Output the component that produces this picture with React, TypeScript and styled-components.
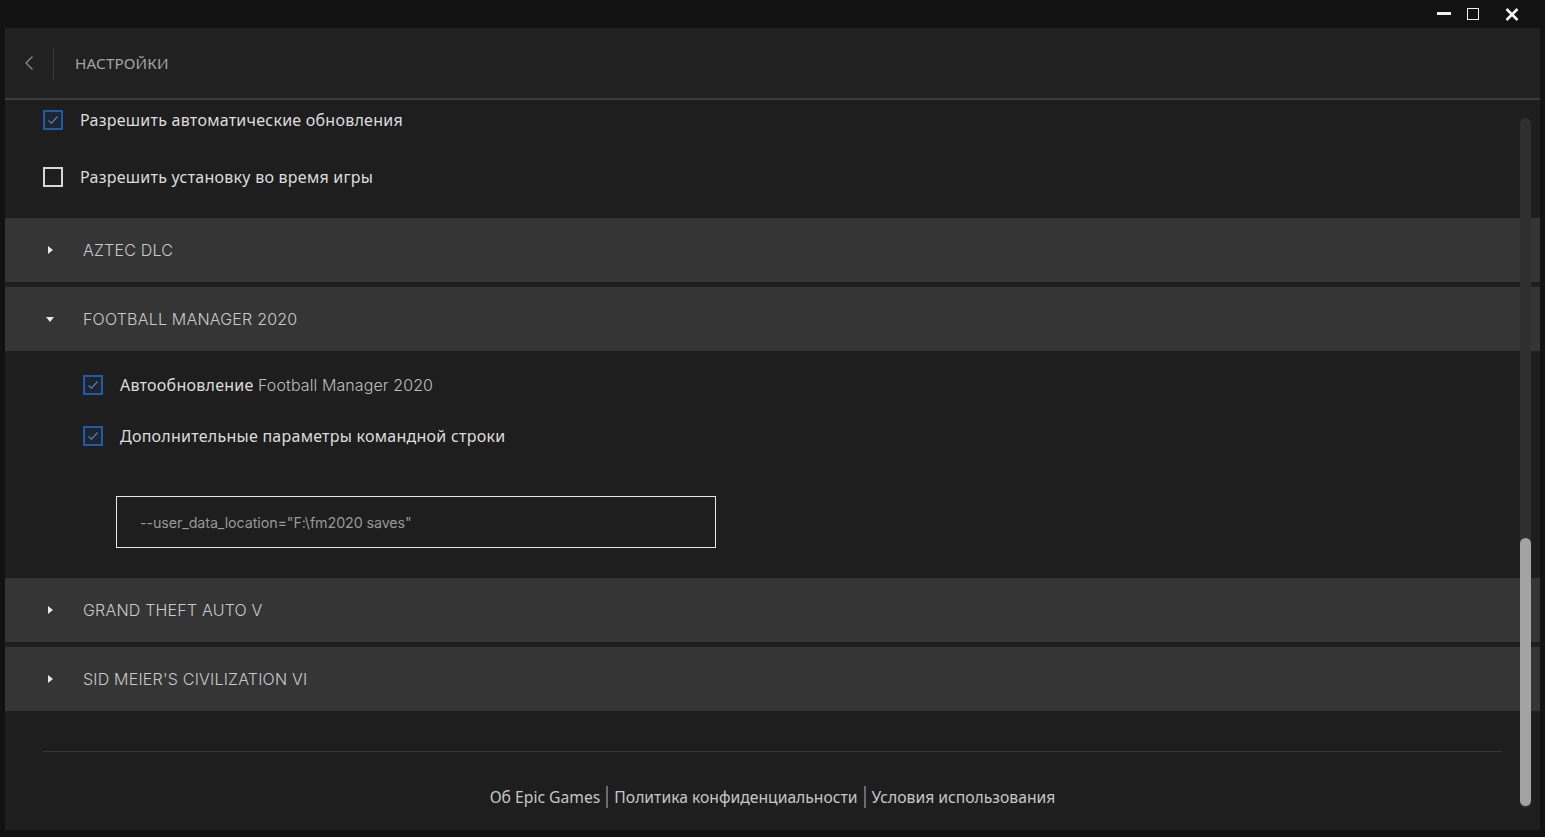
import React from "react";
import styled, { createGlobalStyle } from "styled-components";

const GlobalStyle = createGlobalStyle`
  html, body {
    margin: 0;
    padding: 0;
    background: #121212;
    font-family: "Noto Sans", "Liberation Sans", sans-serif;
  }
  * { box-sizing: border-box; }
`;

const Frame = styled.div`
  display: flex;
  flex-direction: column;
  height: 837px;
  background: #121212;
  overflow: hidden;
`;

const TitleBar = styled.div`
  display: flex;
  justify-content: flex-end;
  align-items: center;
  height: 28px;
  padding-right: 9px;
`;

const WinButton = styled.div<{ $w: number }>`
  display: flex;
  align-items: center;
  justify-content: center;
  width: ${({ $w }) => $w}px;
  height: 28px;
`;

const Window = styled.div`
  position: relative;
  flex: 1;
  display: flex;
  flex-direction: column;
  margin: 0 5px 7px 5px;
  background: #1e1e1e;
`;

const Header = styled.div`
  display: flex;
  align-items: center;
  height: 70px;
  padding-left: 17px;
  background: #212121;
`;

const Separator = styled.div`
  width: 1px;
  height: 32px;
  margin-left: 17px;
  background: #3a3a3a;
`;

const Title = styled.div`
  margin-left: 21px;
  font-size: 15.3px;
  color: #a4a4a4;
  letter-spacing: 0.1px;
`;

const Divider = styled.div`
  height: 2px;
  background: #3b3b3b;
`;

const Scroll = styled.div`
  position: relative;
  flex: 1;
  overflow: hidden;
`;

const TopList = styled.div`
  display: flex;
  flex-direction: column;
  gap: 37px;
  padding: 10px 0 31px 38px;
`;

const CheckRow = styled.div`
  display: flex;
  align-items: center;
  gap: 17px;
  height: 20px;
`;

const Box = styled.div<{ $checked: boolean }>`
  display: flex;
  align-items: center;
  justify-content: center;
  width: 20px;
  height: 20px;
  border: 2px solid ${({ $checked }) => ($checked ? "#235aa6" : "#d6d6d6")};
  background: ${({ $checked }) => ($checked ? "#1d2531" : "transparent")};
`;

const Label = styled.span`
  font-size: 16px;
  color: #dcdcdc;
  letter-spacing: 0.25px;
  white-space: nowrap;
`;

const GameName = styled.span`
  font-family: Inter, "Liberation Sans", sans-serif;
  font-weight: 300;
  color: #bdbdbd;
  letter-spacing: 0.1px;
`;

const Section = styled.div`
  margin-bottom: 5px;
`;

const SectionHeader = styled.div`
  display: flex;
  align-items: center;
  height: 64px;
  padding-left: 39px;
  background: #353535;
`;

const Arrow = styled.div`
  display: flex;
  align-items: center;
  justify-content: center;
  width: 12px;
  height: 12px;
`;

const SectionTitle = styled.span`
  margin-left: 27px;
  font-family: Inter, "Liberation Sans", sans-serif;
  font-weight: 300;
  font-size: 16px;
  color: #cacaca;
  letter-spacing: 0.2px;
`;

const SectionBody = styled.div`
  display: flex;
  flex-direction: column;
  padding: 24px 0 25px 78px;
`;

const SubList = styled.div`
  display: flex;
  flex-direction: column;
  gap: 31px;
`;

const ArgsInput = styled.div`
  display: flex;
  align-items: center;
  width: 600px;
  height: 52px;
  margin: 50px 0 0 33px;
  padding-left: 23px;
  border: 1px solid #e6e6e6;
  font-family: Inter, "Liberation Sans", sans-serif;
  font-size: 14.3px;
  color: #989898;
  letter-spacing: -0.1px;
`;

const FooterLine = styled.div`
  height: 1px;
  margin: 40px 38px 0 38px;
  background: #363636;
`;

const Footer = styled.div`
  display: flex;
  justify-content: center;
  align-items: center;
  padding-top: 34px;
`;

const FooterLink = styled.span`
  font-size: 15.7px;
  color: #c6c6c6;
  line-height: 22px;
`;

const FooterSep = styled.span`
  width: 2px;
  height: 22px;
  margin: 0 6px;
  background: #6a6a6a;
`;

const ScrollTrack = styled.div`
  position: absolute;
  top: 18px;
  right: 9px;
  bottom: 22px;
  width: 11px;
  border-radius: 6px;
  background: #2f2f2f;
`;

const ScrollThumb = styled.div`
  position: absolute;
  left: 0;
  right: 0;
  bottom: 2px;
  height: 268px;
  border-radius: 6px;
  background: #a3a3a3;
`;

const Check = () => (
  <svg width="12" height="10" viewBox="0 0 12 10">
    <path d="M1.5 5.5 L4.5 8.2 L10.5 1.5" fill="none" stroke="#5a7fb0" strokeWidth="1.2" />
  </svg>
);

const Checkbox = ({ checked }: { checked: boolean }) => (
  <Box $checked={checked}>{checked && <Check />}</Box>
);

const Caret = ({ open }: { open: boolean }) => (
  <Arrow>
    {open ? (
      <svg width="8" height="5" viewBox="0 0 8 5">
        <path d="M0 0 L8 0 L4 5 Z" fill="#e8e8e8" />
      </svg>
    ) : (
      <svg width="5" height="8" viewBox="0 0 5 8">
        <path d="M0 0 L5 4 L0 8 Z" fill="#e8e8e8" />
      </svg>
    )}
  </Arrow>
);

const GameSection = ({
  name,
  open,
  children,
}: {
  name: string;
  open?: boolean;
  children?: React.ReactNode;
}) => (
  <Section>
    <SectionHeader>
      <Caret open={!!open} />
      <SectionTitle>{name}</SectionTitle>
    </SectionHeader>
    {open && <SectionBody>{children}</SectionBody>}
  </Section>
);

export default function App() {
  return (
    <Frame>
      <GlobalStyle />
      <TitleBar>
        <WinButton $w={28}>
          <svg width="14" height="4" viewBox="0 0 14 4">
            <rect x="0" y="0" width="14" height="3" fill="#f0f0f0" />
          </svg>
        </WinButton>
        <WinButton $w={30}>
          <svg width="12" height="12" viewBox="0 0 12 12">
            <rect x="0.5" y="0.5" width="11" height="11" fill="none" stroke="#f0f0f0" strokeWidth="1" />
          </svg>
        </WinButton>
        <WinButton $w={48}>
          <svg width="14" height="13" viewBox="0 0 14 13">
            <path d="M1.5 1 L12.5 12 M12.5 1 L1.5 12" stroke="#f4f4f4" strokeWidth="2.6" />
          </svg>
        </WinButton>
      </TitleBar>
      <Window>
        <Header>
          <svg width="14" height="16" viewBox="0 0 14 16">
            <path d="M10.5 1.5 L4 8 L10.5 14.5" fill="none" stroke="#8a8a8a" strokeWidth="1.3" />
          </svg>
          <Separator />
          <Title>НАСТРОЙКИ</Title>
        </Header>
        <Divider />
        <Scroll>
          <TopList>
            <CheckRow>
              <Checkbox checked />
              <Label>Разрешить автоматические обновления</Label>
            </CheckRow>
            <CheckRow>
              <Checkbox checked={false} />
              <Label>Разрешить установку во время игры</Label>
            </CheckRow>
          </TopList>
          <GameSection name="AZTEC DLC" />
          <GameSection name="FOOTBALL MANAGER 2020" open>
            <SubList>
              <CheckRow>
                <Checkbox checked />
                <Label>
                  Автообновление <GameName>Football Manager 2020</GameName>
                </Label>
              </CheckRow>
              <CheckRow>
                <Checkbox checked />
                <Label>Дополнительные параметры командной строки</Label>
              </CheckRow>
            </SubList>
            <ArgsInput>--user_data_location="F:\fm2020 saves"</ArgsInput>
          </GameSection>
          <GameSection name="GRAND THEFT AUTO V" />
          <GameSection name="SID MEIER'S CIVILIZATION VI" />
          <FooterLine />
          <Footer>
            <FooterLink>Об Epic Games</FooterLink>
            <FooterSep />
            <FooterLink>Политика конфиденциальности</FooterLink>
            <FooterSep />
            <FooterLink>Условия использования</FooterLink>
          </Footer>
          <ScrollTrack>
            <ScrollThumb />
          </ScrollTrack>
        </Scroll>
      </Window>
    </Frame>
  );
}
